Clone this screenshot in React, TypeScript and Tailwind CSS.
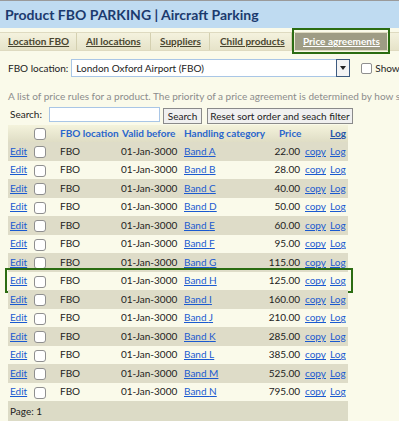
import React from "react";

const rows: [string, string][] = [
  ["A", "22.00"],
  ["B", "28.00"],
  ["C", "40.00"],
  ["D", "50.00"],
  ["E", "60.00"],
  ["F", "95.00"],
  ["G", "115.00"],
  ["H", "125.00"],
  ["I", "160.00"],
  ["J", "210.00"],
  ["K", "285.00"],
  ["L", "385.00"],
  ["M", "525.00"],
  ["N", "795.00"],
];

function Box() {
  return (
    <span className="inline-block w-[12px] h-[12px] rounded-[3px] border border-[#8f8f8f] bg-white align-middle" />
  );
}

const tabs: { t: string; cls: string }[] = [
  { t: "Location FBO", cls: "w-[77px] pl-[8px]" },
  { t: "All locations", cls: "w-[74px] pl-[9px]" },
  { t: "Suppliers", cls: "w-[59px] pl-[9px]" },
  { t: "Child products", cls: "w-[82px] pl-[10px]" },
];

export default function App() {
  return (
    <div
      className="relative w-[399px] h-[421px] overflow-hidden bg-[#fafaea] text-[10px] text-[#222]"
      style={{ fontFamily: 'Lato, "Open Sans", sans-serif' }}
    >
      {/* Title */}
      <div className="h-[28px] border-t border-[#9a9a9a] bg-[#bfdbf1] flex items-center pl-[5px]">
        <span className="text-[14px] font-bold text-[#1b3a6e] whitespace-nowrap">
          Product FBO PARKING | Aircraft Parking
        </span>
      </div>
      {/* Tabs */}
      <div className="mt-[4px] h-[19px] border-t border-b border-[#dedac0] bg-gradient-to-b from-[#f4f2de] to-[#e6e3c9] flex items-stretch">
        {tabs.map(({ t, cls }) => (
          <div
            key={t}
            className={`${cls} shrink-0 border-r border-[#d4d0b0] flex items-center font-bold text-[#4a4630] underline whitespace-nowrap`}
          >
            {t}
          </div>
        ))}
        <div className="relative shrink-0 ml-[3px] w-[92px] pl-[8px] bg-[#9e9c84] flex items-center font-bold text-white underline whitespace-nowrap">
          Price agreements
          <div className="absolute left-[-3px] right-[-3px] top-[-5px] bottom-[-4px] border-2 border-[#2b6c12]" />
        </div>
      </div>

      {/* FBO location */}
      <div className="mt-[8px] flex items-center pl-[8px] h-[18px]">
        <span className="shrink-0 whitespace-nowrap">FBO location:</span>
        <div className="shrink-0 ml-[3px] w-[279px] h-[18px] border border-[#a9c6e6] bg-white flex items-center pl-[4px] relative">
          <span className="whitespace-nowrap">London Oxford Airport (FBO)</span>
          <div className="absolute right-[-1px] top-[-1px] w-[14px] h-[18px] border border-[#3c5a80] bg-[#f4f4f4] flex items-center justify-center">
            <svg width="6" height="4" viewBox="0 0 6 4">
              <path d="M0 0h6L3 4z" fill="#222" />
            </svg>
          </div>
        </div>
        <span className="shrink-0 ml-[11px] inline-block w-[11px] h-[11px] rounded-[2px] border border-[#8f8f8f] bg-white" />
        <span className="shrink-0 ml-[3px] whitespace-nowrap">Show expired</span>
      </div>

      {/* description */}
      <div className="mt-[12px] pl-[8px] whitespace-nowrap text-[#8c8c8c] h-[15px] leading-[15px]">
        A list of price rules for a product. The priority of a price agreement is determined by how specific it is.
      </div>

      {/* search */}
      <div className="mt-[1px] flex items-center pl-[10px] h-[18px]">
        <span className="shrink-0 w-[39px]">Search:</span>
        <div className="shrink-0 w-[111px] h-[15px] border border-[#a9c6e6] bg-white" />
        <div className="shrink-0 ml-[3px] mt-[3px] w-[39px] h-[16px] border border-[#8a8a8a] bg-[#f0f0f0] flex items-center justify-center leading-none">
          Search
        </div>
        <div className="shrink-0 ml-[5px] mt-[3px] w-[146px] h-[16px] border border-[#8a8a8a] bg-[#f0f0f0] flex items-center justify-center leading-none whitespace-nowrap">
          Reset sort order and seach filter
        </div>
      </div>

      {/* table */}
      <div className="mt-[2px] ml-[8px] w-[340px]">
        <div className="h-[17px] flex items-center bg-gradient-to-b from-[#f4f3dc] to-[#dfddc5] font-bold text-[#2a66cc]">
          <span className="w-[22px]" />
          <span className="w-[30px] pl-[4px]"><Box /></span>
          <span className="w-[62px] whitespace-nowrap">FBO location</span>
          <span className="w-[62px] whitespace-nowrap">Valid before</span>
          <span className="w-[95px] whitespace-nowrap">Handling category</span>
          <span className="w-[22px] text-right">Price</span>
          <span className="flex-1 text-right pr-[2px] underline text-[#2554a8]">Log</span>
        </div>
        {rows.map(([b, p], i) => (
          <div
            key={b}
            className={`relative h-[18.5px] flex items-center ${i % 2 === 0 ? "bg-[#dedcc8]" : "bg-[#fafaea]"}`}
          >
            <span className="w-[22px] pl-[2px] underline text-[#1a5ad0]">Edit</span>
            <span className="w-[30px] pl-[4px]"><Box /></span>
            <span className="w-[61px]">FBO</span>
            <span className="w-[63px] whitespace-nowrap">01-Jan-3000</span>
            <span className="w-[76px] underline text-[#1a5ad0] whitespace-nowrap">Band {b}</span>
            <span className="w-[40px] text-right">{p}</span>
            <span className="ml-[5px] underline text-[#1a5ad0]">copy</span>
            <span className="ml-[4px] underline text-[#1a5ad0]">Log</span>
            {b === "H" && (
              <div className="absolute left-[-3px] right-[-5px] top-[-4px] bottom-[-3px] border-2 border-[#2b6c12]" />
            )}
          </div>
        ))}
        <div className="h-[30px] bg-[#dcdbc6] pl-[2px] pt-[3px]">Page: 1</div>
      </div>
    </div>
  );
}
